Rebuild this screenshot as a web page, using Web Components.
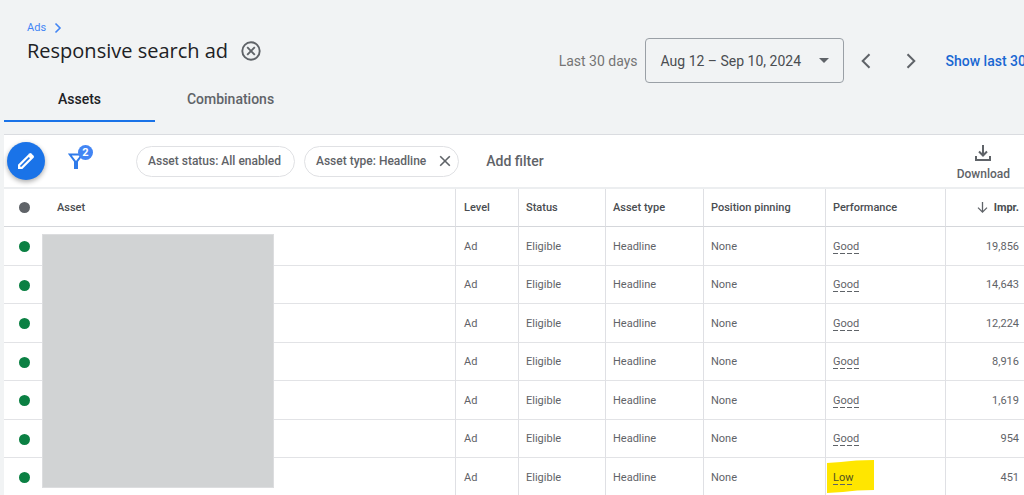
<!DOCTYPE html>
<html lang="en">
<head>
<meta charset="utf-8">
<meta name="viewport" content="width=device-width, initial-scale=1">
<title>Responsive search ad</title>
<style>
html, body { margin: 0; height: 100%; }
body { background: #f1f3f4; color: #5f6368; font-family: Roboto, "Liberation Sans", sans-serif; font-size: 11px; line-height: 16px; overflow: hidden; --display: "Open Sans", sans-serif; }
</style>
</head>
<body>
<ads-page></ads-page>
<script>
const define = (name, html, setup) => {
  const template = document.createElement('template');
  template.innerHTML = '<style>*{box-sizing:border-box}button{font:inherit;color:inherit;background:none;border:0;padding:0;margin:0;cursor:pointer}svg{display:block;flex:none}a{text-decoration:none}</style>' + html;
  customElements.define(name, class extends HTMLElement {
    constructor() {
      super();
      this.attachShadow({ mode: 'open' }).append(template.content.cloneNode(true));
      if (setup) setup(this.shadowRoot, this);
    }
  });
};

define('page-title', `
<style>
:host { display: block; }
nav { display: flex; align-items: center; gap: 8px; height: 16px; color: #4285f4; }
nav a { color: inherit; }
.row { display: flex; align-items: center; gap: 13px; }
h1 { margin: 0; font: 400 20px/30px var(--display); color: #202124; white-space: nowrap; }
button { color: #5f6368; }
</style>
<nav aria-label="Breadcrumb"><a href="#ads">Ads</a>
<svg width="8" height="12" viewBox="0 0 8 12" fill="none" stroke="currentColor" stroke-width="1.6"><path d="M1.500 1.500 6 6l-4.500 4.500"/></svg></nav>
<div class="row"><h1><slot></slot></h1>
<button aria-label="Ad removed"><svg width="20" height="20" viewBox="0 0 20 20" fill="none" stroke="currentColor" stroke-width="1.900"><circle cx="10" cy="10" r="8.700"/><path d="m6.200 6.200 7.600 7.600m0-7.600-7.600 7.600"/></svg></button></div>`);

define('date-range', `
<style>
:host { display: flex; align-items: center; font-size: 14px; line-height: 20px; white-space: nowrap; }
.preset { color: #757575; margin-right: 7px; }
.range { display: flex; align-items: center; justify-content: space-between; width: 199px; height: 45px; padding: 0 14px 0 15px; border: 1px solid #9aa0a6; border-radius: 4px; color: #4a4d51; }
.step { display: flex; align-items: center; justify-content: center; width: 45px; height: 45px; color: #5f6368; }
a { font-weight: 500; color: #1967d2; margin-left: 12px; }
</style>
<span class="preset">Last 30 days</span>
<button class="range" aria-haspopup="dialog">Aug 12 – Sep 10, 2024<svg width="10" height="5" viewBox="0 0 10 5"><path d="M0 0h10L5 5z" fill="#5f6368"/></svg></button>
<button class="step" aria-label="Previous period"><svg width="10" height="16" viewBox="0 0 10 16" fill="none" stroke="currentColor" stroke-width="2"><path d="M8.500 1.200 1.700 8l6.800 6.800"/></svg></button>
<button class="step" aria-label="Next period"><svg width="10" height="16" viewBox="0 0 10 16" fill="none" stroke="currentColor" stroke-width="2"><path d="M1.500 1.200 8.300 8l-6.800 6.800"/></svg></button>
<a href="#last30">Show last 30</a>`);

define('tab-bar', `
<style>
:host { display: flex; font-size: 14px; font-weight: 500; line-height: 20px; }
button { width: 151px; height: 44px; border-bottom: 2px solid transparent; }
button[aria-selected=true] { color: #202124; border-color: #1a73e8; }
</style>
<button role="tab" aria-selected="true">Assets</button><button role="tab" aria-selected="false">Combinations</button>`);

define('filter-chip', `
<style>
:host { display: flex; align-items: center; gap: 13px; height: 31px; padding: 0 13px 0 11px; border: 1px solid #e0e1e4; border-radius: 16px; font-size: 12px; font-weight: 500; white-space: nowrap; }
:host([removable]) { padding-right: 7px; }
:host(:not([removable])) .remove { display: none; }
</style>
<button><slot></slot></button>
<button class="remove" aria-label="Remove filter"><svg width="12" height="12" viewBox="0 0 12 12" fill="none" stroke="currentColor" stroke-width="1.600"><path d="m1.200 1.200 9.600 9.600m0-9.600-9.600 9.600"/></svg></button>`);

define('filter-toolbar', `
<style>
:host { display: flex; align-items: center; height: 52px; padding: 0 14px 0 3px; }
.edit { display: grid; place-items: center; width: 38px; height: 38px; border-radius: 50%; background: #1a73e8; color: #fff; box-shadow: 0 2px 5px #0005; }
.filter { position: relative; margin-left: 23px; color: #2f7bea; }
.badge { position: absolute; left: 10px; top: -8px; width: 15px; height: 15px; border-radius: 50%; background: #4285f4; color: #fff; font: 700 11px/15px Roboto; text-align: center; }
.chips { display: flex; gap: 9px; margin-left: 52px; }
.add { margin-left: 27px; font-size: 14px; font-weight: 500; line-height: 20px; }
.download { display: flex; flex-direction: column; align-items: center; gap: 5px; margin-left: auto; padding-top: 4px; font-size: 12px; font-weight: 500; }
</style>
<button class="edit" aria-label="Edit"><svg width="18" height="18" viewBox="0 0 18 18"><path d="M1 17v-4.300L12.300 1.400q1-.9 2 0l2.300 2.300q.9 1 0 2L5.300 17Z" fill="currentColor"/><path d="m3.500 14.500 8.900-8.900" stroke="#1a73e8" stroke-width="1.700"/></svg></button>
<button class="filter" aria-label="Filters, 2 applied"><svg width="16" height="16" viewBox="0 0 16 16" fill="none" stroke="currentColor" stroke-width="2"><path d="M1.800 1.500h12.400L9 8.300V15H7V8.300Z"/></svg><span class="badge">2</span></button>
<div class="chips"><filter-chip>Asset status: All enabled</filter-chip><filter-chip removable>Asset type: Headline</filter-chip></div>
<button class="add">Add filter</button>
<button class="download"><svg width="16" height="16" viewBox="0 0 16 16" fill="none" stroke="currentColor" stroke-width="2"><path d="M8 0v10M4 6.500l4 4 4-4M1 11v4h14v-4"/></svg>Download</button>`);

define('asset-table', `
<style>
:host { display: block; position: relative; border-top: 2px solid #eceef0; }
table { width: 100%; table-layout: fixed; border-collapse: separate; border-spacing: 0; }
th, td { padding: 0 0 0 8px; text-align: left; white-space: nowrap; border-bottom: 1px solid #e2e3e6; border-left: 1px solid #dfe0e4; }
th { height: 38px; font-weight: 500; color: #4a4d51; border-bottom-color: #d5d7db; }
td { height: 39px; padding-top: 1px; }
tr:nth-child(even) td { height: 38px; }
th:nth-child(-n+2), td:nth-child(-n+2) { border-left: 0; }
th:first-child, td:first-child { padding-left: 15px; }
th:nth-child(2) { padding-left: 13px; }
th:nth-child(n+4), td:nth-child(n+4) { padding-left: 7px; }
th:last-child, td:last-child { text-align: right; padding-right: 5px; }
th:last-child { font-weight: 700; }
.sort { display: flex; align-items: center; justify-content: flex-end; gap: 6px; }
.dot { display: block; width: 11px; height: 11px; border-radius: 50%; background: #0b8043; }
th .dot { background: #5f6368; }
.rating { display: block; width: max-content; line-height: 14px; background: repeating-linear-gradient(90deg, #5f6368 0 5px, transparent 5px 7px) bottom / 100% 1px no-repeat; }
.low { position: relative; z-index: 0; color: #4f5020; }
.low svg { position: absolute; z-index: -1; left: 1px; top: 1px; }
.redacted { position: absolute; left: 38px; top: 45px; width: 232px; height: 254px; background: #d1d3d4; border: 1px solid #dcdddf; }
</style>
<table><colgroup><col style="width:40px"><col><col style="width:63px"><col style="width:87px"><col style="width:98px"><col style="width:122px"><col style="width:120px"><col style="width:79px"></colgroup>
<thead><tr><th aria-label="State"><span class="dot"></span></th><th>Asset</th><th>Level</th><th>Status</th><th>Asset type</th><th>Position pinning</th><th>Performance</th><th><span class="sort"><svg width="11" height="11" viewBox="0 0 11 11" fill="none" stroke="#5f6368" stroke-width="1.300"><path d="M5.500 0v10M1 5.600l4.500 4.500L10 5.600"/></svg>Impr.</span></th></tr></thead><tbody></tbody></table>
<div class="redacted"></div>`, root => {
  const rows = [['Good', '19,856'], ['Good', '14,643'], ['Good', '12,224'], ['Good', '8,916'], ['Good', '1,619'], ['Good', '954'], ['Low', '451']];
  const marker = '<svg width="48" height="34" viewBox="0 0 48 34"><path d="M0 4 14 3q14-2 33-2v30q-18 0-31 2L0 34Z" fill="#ffe600"/></svg>';
  root.querySelector('tbody').innerHTML = rows.map(([rating, impr]) =>
    `<tr><td><span class="dot"></span></td><td></td><td>Ad</td><td>Eligible</td><td>Headline</td><td>None</td><td class="${rating.toLowerCase()}">${rating === 'Low' ? marker : ''}<span class="rating">${rating}</span></td><td>${impr}</td></tr>`).join('');
});

define('ads-page', `
<style>
:host { display: block; padding-left: 4px; min-height: 100%; }
header { display: flex; align-items: flex-start; justify-content: space-between; height: 78px; padding-left: 23px; }
page-title { margin-top: 20px; }
date-range { margin: 38px -2px 0 0; }
main { margin-top: 12px; background: #fff; border-top: 1px solid #dadce0; }
</style>
<header><page-title>Responsive search ad</page-title><date-range></date-range></header>
<tab-bar role="tablist"></tab-bar>
<main><filter-toolbar></filter-toolbar><asset-table></asset-table></main>`);
</script>
</body>
</html>
